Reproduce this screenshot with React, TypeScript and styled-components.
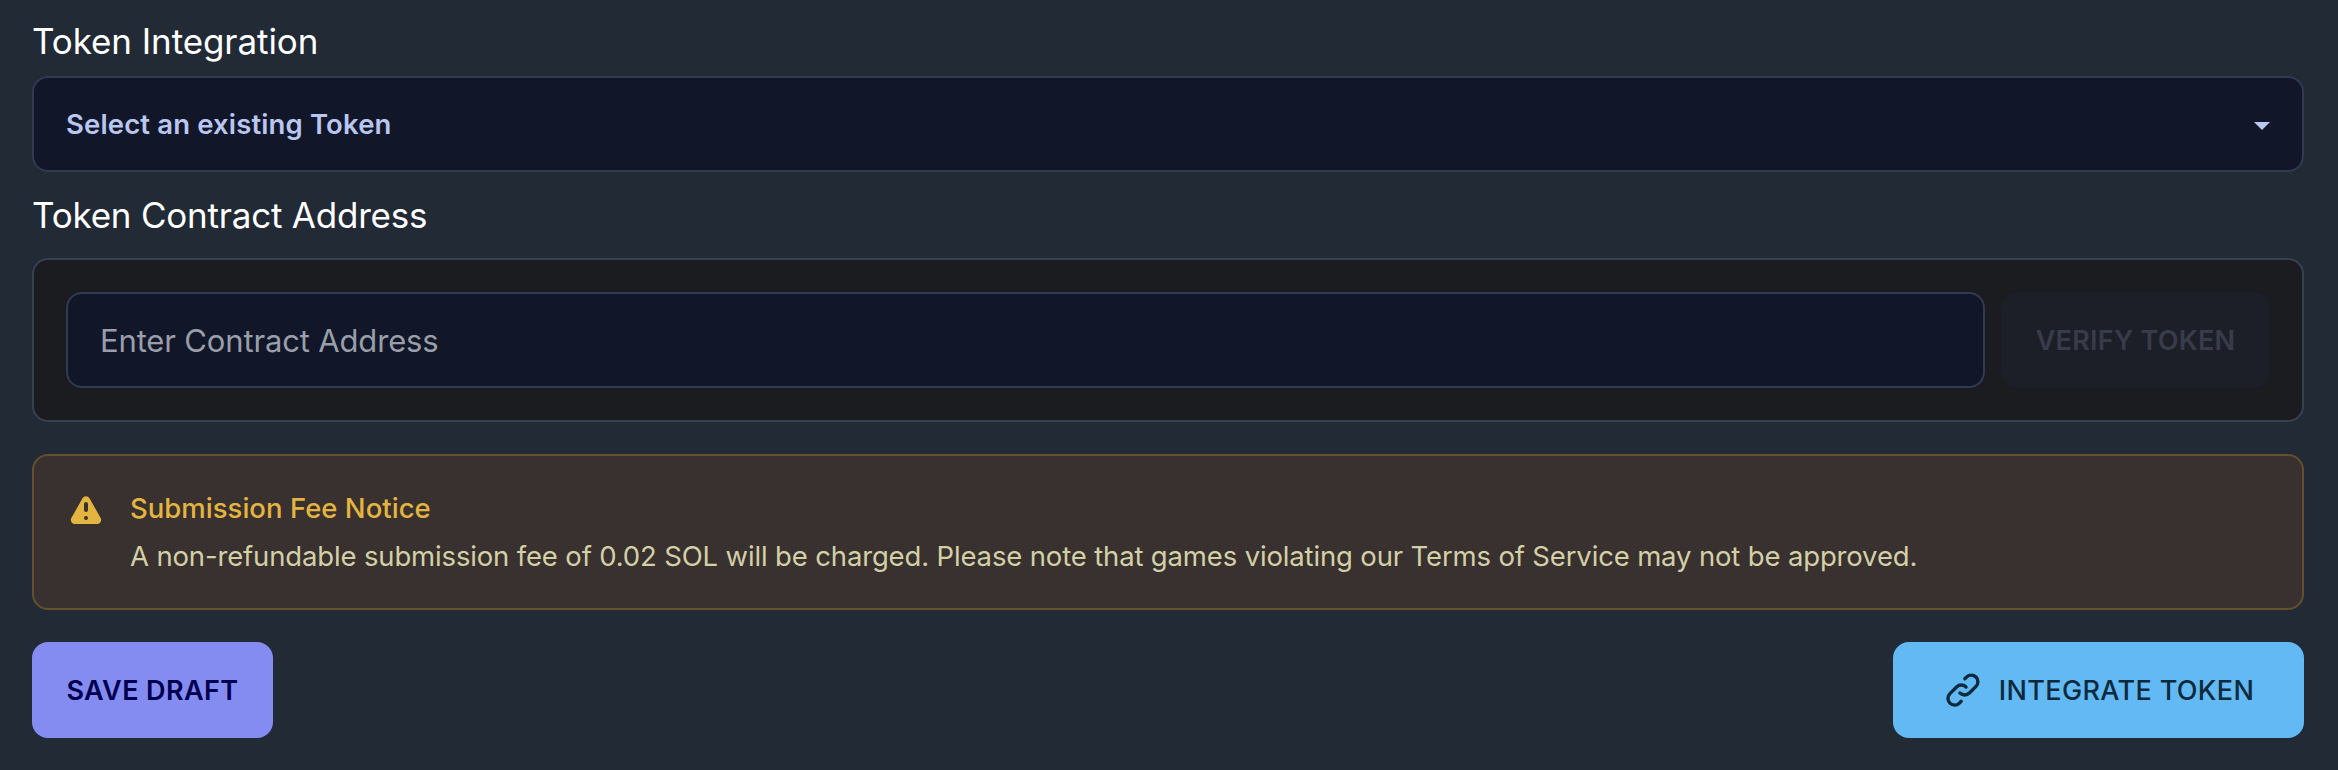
import React from 'react';
import styled, { createGlobalStyle, css } from 'styled-components';
import { HiExclamation, HiOutlineLink } from 'react-icons/hi';

const GlobalStyle = createGlobalStyle`
  *, *::before, *::after { box-sizing: border-box; }
  body {
    margin: 0;
    background: #212a35;
    font-family: Inter, "Liberation Sans", sans-serif;
  }
`;

const Form = styled.main`
  display: flex;
  flex-direction: column;
  min-height: 770px;
  padding: 13px 34px 32px 32px;
`;

const Label = styled.label<{ $gap: number; $tracking: number }>`
  margin-bottom: ${({ $gap }) => $gap}px;
  color: #fff;
  font-size: 35px;
  line-height: 56px;
  letter-spacing: ${({ $tracking }) => $tracking}px;
`;

const fieldBox = css`
  height: 96px;
  border: 2px solid #323a52;
  border-radius: 16px;
  background: #111628;
`;

const Select = styled.button`
  ${fieldBox}
  display: flex;
  align-items: center;
  justify-content: space-between;
  margin-bottom: 15px;
  padding: 0 32px;
  color: #b9c6f0;
  font: 600 27.5px Inter, sans-serif;
  letter-spacing: 0.14px;
`;

const Caret = styled.span`
  margin-top: 4px;
  border: solid transparent;
  border-width: 8px 8px 0;
  border-top-color: #b9c6f0;
`;

const Panel = styled.section`
  display: flex;
  gap: 16px;
  margin-bottom: 32px;
  padding: 32px;
  border: 2px solid #374151;
  border-radius: 16px;
  background: #1b1c20;
`;

const AddressInput = styled.input`
  ${fieldBox}
  flex: 1;
  min-width: 0;
  padding: 0 32px;
  color: #fff;
  font: 400 31px Inter, sans-serif;
  letter-spacing: -0.154px;

  &::placeholder { color: #999ea9; opacity: 1; }
`;

const Notice = styled.section`
  display: flex;
  align-items: flex-start;
  gap: 24px;
  margin-bottom: 32px;
  padding: 32px;
  border: 2px solid #65502f;
  border-radius: 16px;
  background: #38312f;
`;

const WarningIcon = styled(HiExclamation)`
  flex: none;
  width: 40px;
  height: 40px;
  margin-top: 4px;
  color: #e3b540;
`;

const NoticeBody = styled.div`
  display: flex;
  flex-direction: column;
  gap: 8px;
  line-height: 40px;
`;

const NoticeTitle = styled.h3`
  margin: 0;
  color: #e3b540;
  font-size: 27.5px;
  font-weight: 500;
  letter-spacing: 0.02px;
`;

const NoticeText = styled.p`
  margin: 0;
  color: #d3cfa6;
  font-size: 27.5px;
  letter-spacing: -0.152px;
  white-space: nowrap;
`;

const Actions = styled.footer`
  display: flex;
  justify-content: space-between;
`;

const tones = {
  muted: { bg: '#1c1e28', fg: '#383c4a', width: 269, weight: 600, tracking: 0.26 },
  primary: { bg: '#848cf1', fg: '#00004f', width: 241, weight: 600, tracking: 0.4 },
  info: { bg: '#62b9f4', fg: '#0c2a3c', width: 411, weight: 500, tracking: 0.36 },
};

const Button = styled.button<{ $tone: keyof typeof tones }>`
  display: flex;
  align-items: center;
  justify-content: center;
  gap: 16px;
  flex: none;
  width: ${({ $tone }) => tones[$tone].width}px;
  height: 96px;
  padding: 0;
  border: 0;
  border-radius: 16px;
  background: ${({ $tone }) => tones[$tone].bg};
  color: ${({ $tone }) => tones[$tone].fg};
  font: ${({ $tone }) => tones[$tone].weight} 27px Inter, sans-serif;
  letter-spacing: ${({ $tone }) => tones[$tone].tracking}px;
  white-space: nowrap;
`;

const LinkIcon = styled(HiOutlineLink)`
  width: 40px;
  height: 40px;
`;

export default function App() {
  return (
    <>
      <GlobalStyle />
      <Form>
        <Label as="span" $gap={7} $tracking={-0.081}>Token Integration</Label>
        <Select type="button">
          Select an existing Token
          <Caret />
        </Select>
        <Label htmlFor="address" $gap={15} $tracking={-0.213}>Token Contract Address</Label>
        <Panel>
          <AddressInput id="address" placeholder="Enter Contract Address" />
          <Button $tone="muted" disabled>VERIFY TOKEN</Button>
        </Panel>
        <Notice>
          <WarningIcon />
          <NoticeBody>
            <NoticeTitle>Submission Fee Notice</NoticeTitle>
            <NoticeText>
              A non-refundable submission fee of 0.02 SOL will be charged. Please note that games
              violating our Terms of Service may not be approved.
            </NoticeText>
          </NoticeBody>
        </Notice>
        <Actions>
          <Button $tone="primary">SAVE DRAFT</Button>
          <Button $tone="info">
            <LinkIcon />
            INTEGRATE TOKEN
          </Button>
        </Actions>
      </Form>
    </>
  );
}
